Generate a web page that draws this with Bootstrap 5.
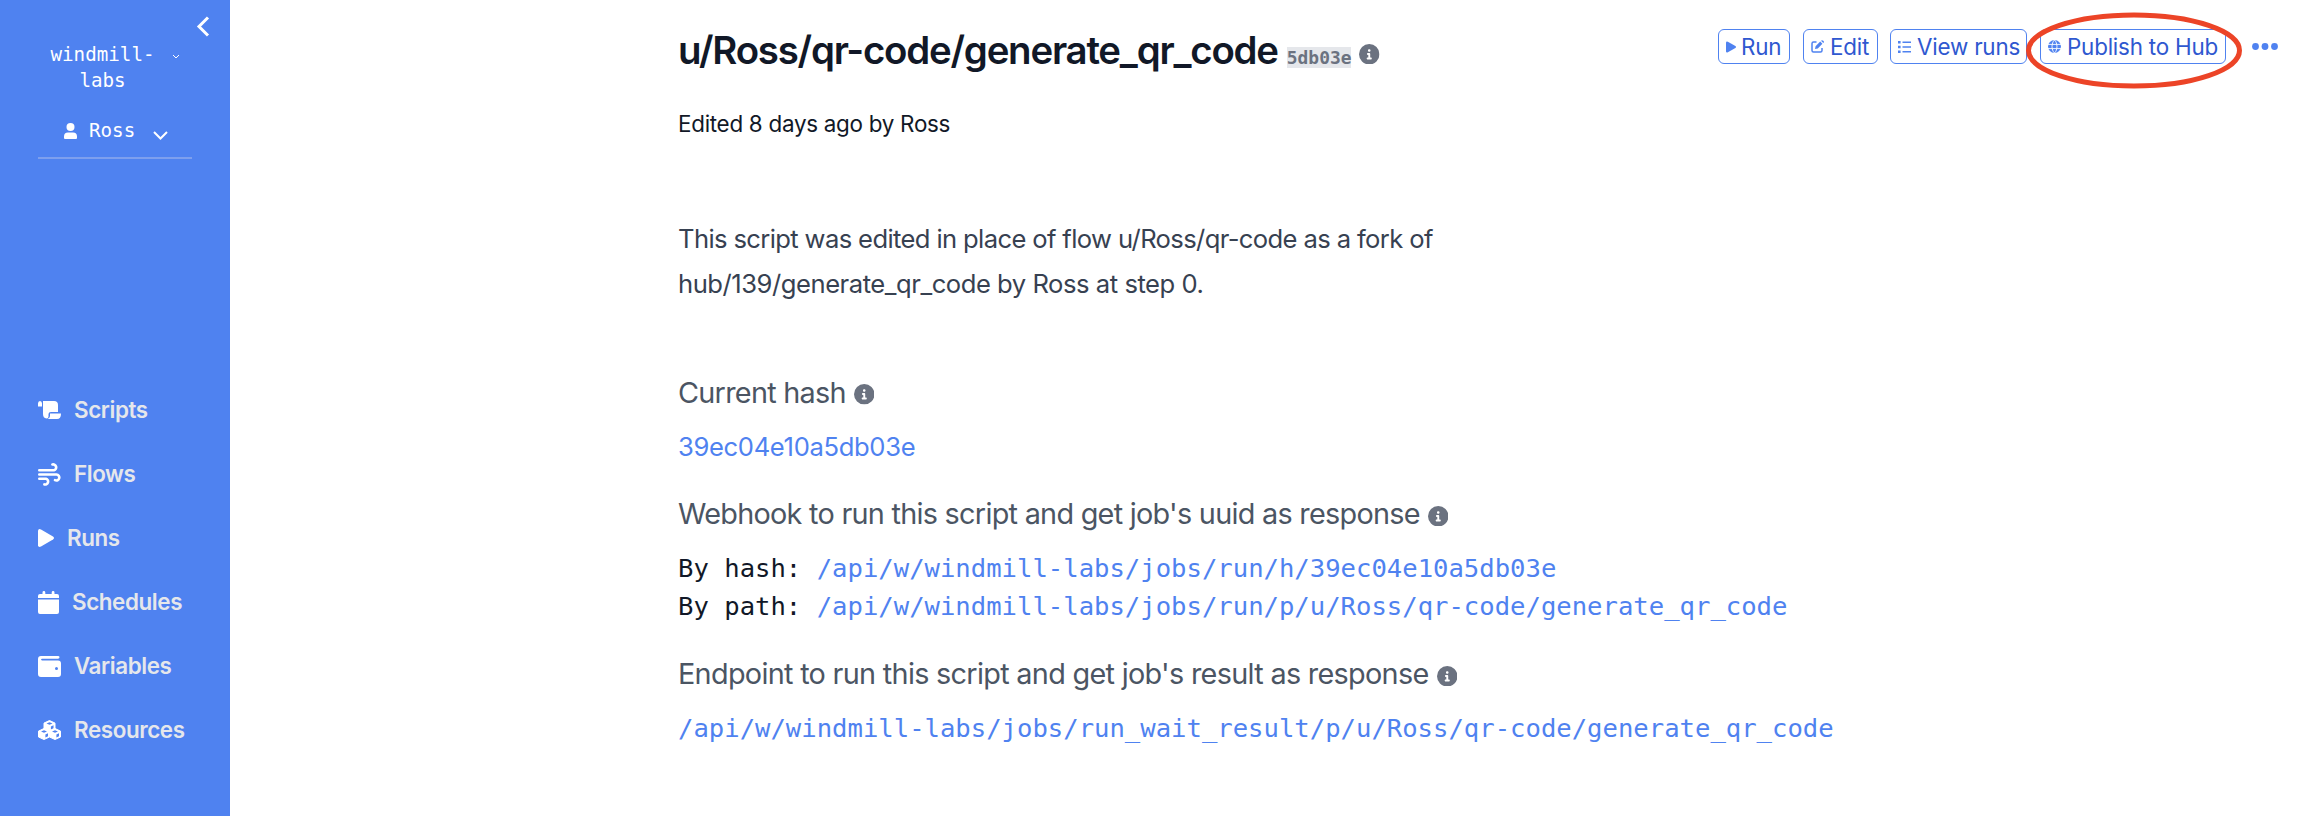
<!DOCTYPE html>
<html lang="en">
<head>
<meta charset="utf-8">
<title>u/Ross/qr-code/generate_qr_code</title>
<link rel="stylesheet" href="https://cdn.jsdelivr.net/npm/bootstrap@5.3.0/dist/css/bootstrap.min.css">
<style>
  :root { --wm-blue: #4f82f0; }
  body { font-family: Inter, "Liberation Sans", sans-serif; color: #111827; overflow: hidden; }
  a { color: var(--wm-blue); text-decoration: none; }
  svg { flex: none; fill: currentColor; }
  .mono { font-family: "DejaVu Sans Mono", monospace; letter-spacing: 0; }
  .side { width: 230px; background: #4f82f0; color: #fff; }
  .side-head { padding: 16px 20px 0 38px; height: 411px; }
  .side .mono { font-size: 19.2px; line-height: 25.6px; }
  .user-row { border-bottom: 2px solid #7d9fee; height: 65px; width: 154px; padding-left: 26px; }
  .side .nav-link { color: #e5e7eb; font-size: 22.4px; font-weight: 600; letter-spacing: -.4px; height: 64px; padding: 0 0 0 38px; line-height: 32px; }
  .side .nav-link svg { color: #fff; margin-right: 13px; }
  .script-view { padding: 0 22px 0 448px; }
  .script-title { font-size: 38.4px; font-weight: 600; letter-spacing: -1.21px; line-height: 51px; height: 50px; margin: 25px 0 0; }
  .hash-tag { font-size: 17.92px; font-weight: 700; background: #e5e7eb; color: #6b7280; line-height: 21px; margin: 0 8px 0 9px; }
  .tool-btn { --bs-btn-color: #2f58d0; --bs-btn-border-color: var(--wm-blue); --bs-btn-border-radius: 6px; --bs-btn-padding-x: 7px; --bs-btn-padding-y: 0; font-size: 22.4px; line-height: 32px; height: 35px; white-space: nowrap; letter-spacing: -.2px; }
  .tool-btn svg { color: var(--wm-blue); }
  .edited { font-size: 22.4px; line-height: 32px; letter-spacing: -.27px; margin: 33px 0 0; }
  .summary { font-size: 25.6px; line-height: 44.8px; letter-spacing: -.63px; color: #374151; width: 800px; margin: 77px 0 0; }
  .summary span { letter-spacing: -.46px; }
  h3 { font-size: 28.8px; font-weight: 400; line-height: 44px; letter-spacing: -.72px; height: 44px; color: #4b5563; margin: 0; }
  .info { width: 20.5px; height: 20.5px; color: #6b7280; }
  .value { font-size: 25.6px; line-height: 38.4px; }
  .highlight-ring { position: absolute; left: -16px; top: -18px; width: 219px; height: 79px; overflow: visible; fill: none; stroke: #ec4427; stroke-width: 5; }
</style>
</head>
<body>
<svg class="d-none">
  <symbol id="i-info" viewBox="0 0 512 512"><path fill-rule="evenodd" d="M256 0a256 256 0 1 0 0 512a256 256 0 1 0 0-512zM256 128c17.700 0 32 14.300 32 32s-14.300 32-32 32-32-14.300-32-32 14.300-32 32-32zM296 384h-80c-13.300 0-24-10.700-24-24s10.700-24 24-24h16v-64h-8c-13.300 0-24-10.700-24-24s10.700-24 24-24h32c13.300 0 24 10.700 24 24v88h16c13.300 0 24 10.700 24 24s-10.700 24-24 24z"/></symbol>
</svg>
<div class="d-flex vh-100">
  <nav class="side d-flex flex-column flex-shrink-0">
    <div class="side-head">
      <div class="d-flex justify-content-end"><svg width="14" height="21" viewBox="0 0 14 21" style="fill:none" stroke="#fff" stroke-width="3"><path d="M12 1.500L3 10.500l9 9"/></svg></div>
      <div class="d-flex mono" style="margin-top:5px">
        <div class="text-center" style="width:129px">windmill-<br>labs</div>
        <svg width="8" height="6" viewBox="0 0 8 6" style="fill:none;margin-top:12px;margin-left:5px" stroke="#fff"><path d="M1 1l3 3 3-3"/></svg>
      </div>
      <div class="user-row d-flex mono" style="margin-top:1px">
        <svg width="13" height="17" viewBox="0 0 13 17" style="margin-top:29px"><circle cx="6.500" cy="4" r="4"/><path d="M4 9.500h5a4 4 0 0 1 4 4v1.500a1 1 0 0 1-1 1H1a1 1 0 0 1-1-1v-1.500a4 4 0 0 1 4-4z"/></svg>
        <span style="margin:24px 0 0 12px">Ross</span>
        <svg width="15" height="9" viewBox="0 0 15 9" style="fill:none;margin:37px 0 0 18px" stroke="#fff" stroke-width="2"><path d="M1 1l6.500 6.500L14 1"/></svg>
      </div>
    </div>
    <div class="nav flex-column flex-nowrap" style="margin-top:-33px">
      <a class="nav-link d-flex align-items-center" href="#"><svg width="23" height="18" viewBox="0 0 23 18"><path d="M0 5.500V2.500Q0 0 2 0t2 2.500v3zM5 0h11q4 0 4 4v7h-7q-2.500 0-2.500 2v2.500q0 2-2 2Q5 17 5 13zM12 12.500h11q0 5.500-4 5.500H9.500q2.500-.8 2.500-3z"/></svg>Scripts</a>
      <a class="nav-link d-flex align-items-center" href="#"><svg width="23" height="23" viewBox="0 0 23 23" style="fill:none" stroke="currentColor" stroke-width="2.600" stroke-linecap="round"><path d="M1.300 7.200H16a2.900 2.900 0 1 0-1.600-5.700M1.300 11.500H18.500a3 3 0 1 1-1.500 5.700M1.300 15.800H8a2.900 2.900 0 1 1-1.600 5.600"/></svg>Flows</a>
      <a class="nav-link d-flex align-items-center" href="#"><svg width="16" height="18" viewBox="0 0 16 18"><path d="M0 1.800Q.3-.7 3 .5l12 7q2 1.500 0 3l-12 7Q.3 18.700 0 16.200z"/></svg>Runs</a>
      <a class="nav-link d-flex align-items-center" href="#"><svg width="21" height="23" viewBox="0 0 21 23"><path d="M0 7V5q0-2 2-2h2.500V1.400a1.400 1.400 0 0 1 2.800 0V3h6.400V1.400a1.400 1.400 0 0 1 2.800 0V3H19q2 0 2 2v2zM0 8.500h21V21q0 2-2 2H2q-2 0-2-2z"/></svg>Schedules</a>
      <a class="nav-link d-flex align-items-center" href="#"><svg width="23" height="21" viewBox="0 0 23 21"><path fill-rule="evenodd" d="M3 0h17q1.500 0 1.500 1.300T20 2.800H4q-.9 0-.9.800t.9.800h16q3 0 3 3V18q0 3-3 3H3q-3 0-3-3V3q0-3 3-3zM18.500 11a1.500 1.500 0 1 0 0 3a1.500 1.500 0 1 0 0-3z"/></svg>Variables</a>
      <a class="nav-link d-flex align-items-center" href="#"><svg width="23" height="20" viewBox="0 0 23 20"><defs><g id="cube"><path d="M0 2.600L5.500 0 11 2.600v5.900L5.500 11 0 8.500z" stroke="#fff" stroke-linejoin="round"/><path d="M2.500 3l3-1.200L8.500 3l-3 1.200zM6.900 6l2.600-1.200v3L6.900 9z" fill="#4f82f0"/></g></defs><use href="#cube" x="6" y=".5"/><use href="#cube" x=".5" y="8.500"/><use href="#cube" x="11.500" y="8.500"/></svg>Resources</a>
    </div>
  </nav>
  <main class="script-view flex-grow-1">
    <div class="d-flex justify-content-between">
      <h1 class="script-title d-flex align-items-baseline"><span>u/Ross/qr-code/generate_qr_code</span><span class="hash-tag mono">5db03e</span><svg class="info" style="margin-bottom:1px"><use href="#i-info"/></svg></h1>
      <div class="d-flex" style="margin-top:29px">
        <button class="btn tool-btn d-flex align-items-center" style="margin-right:13px;width:72px"><svg width="10" height="12" viewBox="0 0 16 18" style="margin-right:5px"><path d="M0 1.800Q.3-.7 3 .5l12 7q2 1.500 0 3l-12 7Q.3 18.700 0 16.200z"/></svg>Run</button>
        <button class="btn tool-btn d-flex align-items-center" style="margin-right:12px;width:75px"><svg width="13" height="13" viewBox="0 0 13 13" style="margin-right:6px"><path d="M5.500 2H2.500Q1 2 1 3.500v7Q1 12 2.500 12h7q1.500 0 1.500-1.500V8" fill="none" stroke="currentColor" stroke-width="1.500"/><path d="M4 9l.6-2.800L9.200 1.600l2.200 2.200-4.600 4.600zM10 .8q1-1.200 2.300 0t0 2.200z"/></svg>Edit</button>
        <button class="btn tool-btn d-flex align-items-center" style="margin-right:13px;width:137px"><svg width="13" height="12" viewBox="0 0 13 12" style="margin-right:6px"><path d="M0 0h2.600v2.600H0zM0 4.700h2.600v2.600H0zM0 9.400h2.600V12H0zM4.500.6H13v1.400H4.500zM4.500 5.300H13v1.400H4.500zM4.500 10H13v1.400H4.500z"/></svg>View runs</button>
        <div class="position-relative">
          <button class="btn tool-btn d-flex align-items-center" style="width:186px"><svg width="13" height="13" viewBox="0 0 13 13" style="margin-right:6px"><circle cx="6.500" cy="6.500" r="6.500"/><path d="M0 4.400h13M0 8.600h13M6.500 0C3.200 3 3.200 10 6.500 13C9.800 10 9.800 3 6.500 0z" fill="none" stroke="#fff" stroke-width=".9"/></svg>Publish to Hub</button>
          <svg class="highlight-ring" viewBox="0 0 219 79"><ellipse cx="110" cy="39.500" rx="105.500" ry="35.500"/></svg>
        </div>
        <a href="#" style="margin:14px 0 0 26px" class="d-flex align-items-start"><svg width="26" height="7" viewBox="0 0 26 7"><circle cx="3.500" cy="3.500" r="3.400"/><circle cx="13" cy="3.500" r="3.400"/><circle cx="22.500" cy="3.500" r="3.400"/></svg></a>
      </div>
    </div>
    <p class="edited">Edited 8 days ago by Ross</p>
    <p class="summary">This script was edited in place of flow u/Ross/qr-code as a fork of <span>hub/139/generate_qr_code by Ross at step 0.</span></p>
    <h3 class="d-flex align-items-center" style="margin-top:64px"><span>Current hash</span><svg class="info" style="margin:4px 0 0 8px"><use href="#i-info"/></svg></h3>
    <div class="value" style="margin-top:13px;letter-spacing:-.34px"><a href="#">39ec04e10a5db03e</a></div>
    <h3 class="d-flex align-items-center" style="margin-top:26px"><span>Webhook to run this script and get job's uuid as response</span><svg class="info" style="margin:4px 0 0 8px"><use href="#i-info"/></svg></h3>
    <div class="value mono" style="margin-top:13px">By hash: <a href="#">/api/w/windmill-labs/jobs/run/h/39ec04e10a5db03e</a><br>By path: <a href="#">/api/w/windmill-labs/jobs/run/p/u/Ross/qr-code/generate_qr_code</a></div>
    <h3 class="d-flex align-items-center" style="margin-top:26px;letter-spacing:-.69px"><span>Endpoint to run this script and get job's result as response</span><svg class="info" style="margin:4px 0 0 8px"><use href="#i-info"/></svg></h3>
    <div class="value mono" style="margin-top:13px"><a href="#">/api/w/windmill-labs/jobs/run_wait_result/p/u/Ross/qr-code/generate_qr_code</a></div>
  </main>
</div>
<script src="https://cdn.jsdelivr.net/npm/bootstrap@5.3.0/dist/js/bootstrap.bundle.min.js"></script>
</body>
</html>
